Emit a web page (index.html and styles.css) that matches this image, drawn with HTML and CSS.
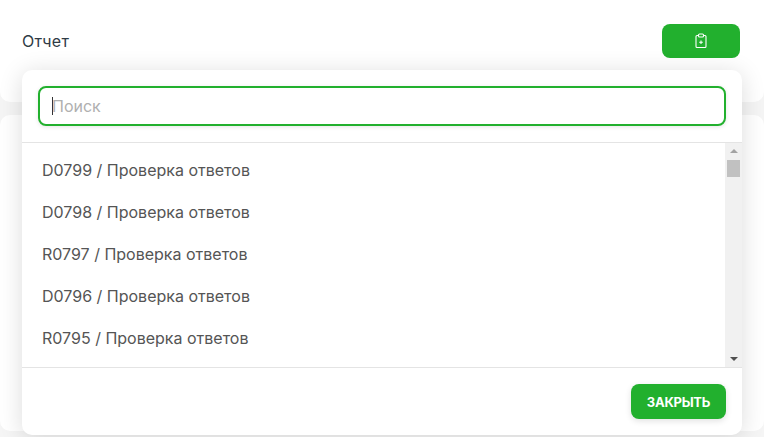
FILE: index.html
```html
<!DOCTYPE html>
<html lang="ru">
<head>
<meta charset="UTF-8">
<meta name="viewport" content="width=device-width, initial-scale=1.0">
<title>Отчет</title>
<link rel="stylesheet" href="styles.css">
</head>
<body>

<div class="page">
  <div class="card card-top">
    <span class="card-title">Отчет</span>
    <button type="button" class="btn btn-report">
      <svg width="14" height="16" viewBox="0 0 14 16" fill="none" stroke="#fff" stroke-width="1.1">
        <path d="M4.5 2.5H3a1 1 0 0 0-1 1v10a1 1 0 0 0 1 1h8a1 1 0 0 0 1-1v-10a1 1 0 0 0-1-1H9.5"/>
        <rect x="4.5" y="1" width="5" height="3" rx="1"/>
        <path d="M7 7.5v3.5M5.2 9.2h3.6"/>
      </svg>
    </button>
  </div>
  <div class="card card-bottom"></div>
</div>

<div class="modal">
  <div class="modal-search">
    <div class="search-input"><span class="caret"></span><span class="placeholder">Поиск</span></div>
  </div>
  <div class="modal-body">
    <ul class="report-list">
      <li>D0799 / Проверка ответов</li>
      <li>D0798 / Проверка ответов</li>
      <li>R0797 / Проверка ответов</li>
      <li>D0796 / Проверка ответов</li>
      <li>R0795 / Проверка ответов</li>
    </ul>
    <div class="scrollbar">
      <span class="arrow arrow-up"></span>
      <span class="thumb"></span>
      <span class="arrow arrow-down"></span>
    </div>
  </div>
  <div class="modal-footer">
    <button type="button" class="btn btn-close">ЗАКРЫТЬ</button>
  </div>
</div>

</body>
</html>
```

FILE: styles.css
```css
html, body {
  height: 100%;
}
body {
  font-family: Inter, "Liberation Sans", sans-serif;
  background-color: #f5f5f5;
  color: #333;
  margin: 0;
  overflow: hidden;
}
.page {
  display: flex;
  flex-direction: column;
  gap: 13px;
  height: 100%;
  padding-bottom: 6px;
  box-sizing: border-box;
}
.card {
  background-color: #fff;
  border-radius: 10px;
}
.card-top {
  height: 122px;
  margin-top: -20px;
  padding: 44px 24px 0 22px;
  box-sizing: border-box;
  display: flex;
  justify-content: space-between;
  align-items: flex-start;
}
.card-bottom {
  flex: 1;
}
.card-title {
  font-size: 16px;
  line-height: 34px;
  color: #2f3b45;
  letter-spacing: 0.3px;
}
.btn {
  background-color: #22b02e;
  color: #fff;
  border: none;
  border-radius: 8px;
  cursor: pointer;
  font-family: inherit;
}
.btn-report {
  width: 78px;
  height: 34px;
  display: flex;
  align-items: center;
  justify-content: center;
}
.modal {
  position: absolute;
  left: 22px;
  top: 70px;
  width: 720px;
  height: 365px;
  background-color: #fff;
  border-radius: 10px;
  box-shadow: 0 3px 24px rgba(0, 0, 0, 0.14);
  display: flex;
  flex-direction: column;
}
.modal-search {
  padding: 16px;
  border-bottom: 1px solid #e4e4e4;
}
.search-input {
  height: 36px;
  border: 2px solid #22b02e;
  border-radius: 8px;
  display: flex;
  align-items: center;
  padding-left: 12px;
  box-shadow: 0 1px 4px rgba(0, 0, 0, 0.1);
}
.caret {
  width: 1px;
  height: 18px;
  margin-right: -1px;
  background-color: #333;
}
.placeholder {
  font-size: 16px;
  color: #b0b0b0;
}
.modal-body {
  display: flex;
  height: 224px;
  border-bottom: 1px solid #e4e4e4;
}
.report-list {
  flex: 1;
  list-style: none;
  margin: 0;
  padding: 6px 0 0 20px;
}
.report-list li {
  font-size: 16px;
  line-height: 42px;
  color: #555;
}
.scrollbar {
  width: 17px;
  background-color: #f1f1f1;
  display: flex;
  flex-direction: column;
  align-items: center;
}
.arrow {
  width: 0;
  height: 0;
  border-left: 4px solid transparent;
  border-right: 4px solid transparent;
}
.arrow-up {
  margin-top: 6px;
  border-bottom: 4px solid #a3a3a3;
}
.thumb {
  width: 13px;
  height: 17px;
  margin-top: 7px;
  background-color: #c1c1c1;
}
.arrow-down {
  margin-top: auto;
  margin-bottom: 6px;
  border-top: 4px solid #505050;
}
.modal-footer {
  flex: 1;
  display: flex;
  justify-content: flex-end;
  align-items: flex-start;
  padding: 16px 16px 0 0;
}
.btn-close {
  width: 95px;
  height: 35px;
  font-size: 13px;
  font-weight: 700;
  letter-spacing: -0.25px;
  box-shadow: 0 2px 6px rgba(0, 0, 0, 0.12);
}
```
